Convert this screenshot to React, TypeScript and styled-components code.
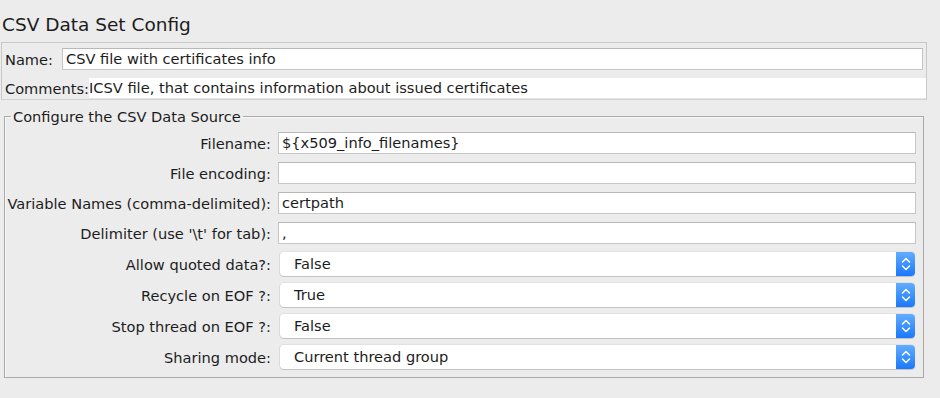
import styled, { createGlobalStyle } from "styled-components"

const GlobalStyle = createGlobalStyle`
    body {
        margin: 0;
        background: #ececec;
        font-family: "Lucida Grande", "DejaVu Sans", sans-serif;
        color: #1c1c1c;
    }
`

const Page = styled.div`
    width: 940px;
    height: 398px;
    overflow: hidden;
    background: #ececec;
`

const Title = styled.h1`
    margin: 0;
    height: 42px;
    padding-left: 2px;
    font-size: 18.5px;
    font-weight: 400;
    line-height: 50px;
`

const NamePanel = styled.div`
    box-sizing: border-box;
    width: 926px;
    margin-left: 1px;
    padding: 5px 0 0 2px;
    border: 1px solid #c8c8c8;
    border-bottom-color: #d2d2d2;
    display: flex;
    flex-direction: column;
    gap: 8px;
`

const NameRow = styled.div<{ $pad?: number }>`
    display: flex;
    align-items: center;
    padding-right: ${p => p.$pad ?? 0}px;
`

const InlineLabel = styled.label<{ $width?: number }>`
    width: ${p => (p.$width ? `${p.$width}px` : "auto")};
    flex-shrink: 0;
    padding-left: 1px;
    font-size: 14.6px;
`

const TextField = styled.div<{ $height?: number }>`
    box-sizing: border-box;
    flex: 1;
    height: ${p => p.$height ?? 22}px;
    padding-left: 3px;
    background: #fff;
    border: 1px solid #c6c6c6;
    border-top-color: #b8b8b8;
    font-size: 14.6px;
    line-height: 20px;
    white-space: nowrap;
    overflow: hidden;
`

const CommentsField = styled(TextField)`
    border: none;
    border-bottom: 1px solid #e4e4e4;
    padding-left: 0;
    height: 21px;
`

const Group = styled.fieldset`
    box-sizing: border-box;
    width: 920px;
    margin: 8px 0 0 4px;
    padding: 7px 7px 8px 0;
    border: 1px solid #a9a9a9;
    box-shadow: inset 1px 1px 0 #f8f8f8;
    min-width: 0;
`

const Legend = styled.legend`
    margin-left: 6px;
    padding: 0 2px;
    font-size: 14.6px;
    line-height: 17px;
`

const Form = styled.div`
    display: grid;
    grid-template-columns: 266px 1fr;
    column-gap: 7px;
    align-items: center;
`

const FieldLabel = styled.label<{ $gap: number }>`
    text-align: right;
    font-size: 14.6px;
    margin-bottom: ${p => p.$gap}px;
`

const FormField = styled(TextField)<{ $gap: number }>`
    margin-bottom: ${p => p.$gap}px;
`

const Combo = styled.div<{ $gap: number }>`
    box-sizing: border-box;
    height: 24px;
    margin: 0 1px ${p => p.$gap}px 2px;
    display: flex;
    align-items: stretch;
    background: #fff;
    border-radius: 4px;
    box-shadow: 0 1px 0 #c2c2c2, 0 -1px 0 #e2e2e2, -1px 0 0 #dadada;
    font-size: 14.6px;
`

const ComboText = styled.span`
    flex: 1;
    padding-left: 14px;
    line-height: 23px;
`

const ComboButton = styled.span`
    width: 19px;
    border-radius: 0 4px 4px 0;
    background: linear-gradient(#63adff, #1a78fa);
    display: flex;
    align-items: center;
    justify-content: center;
`

function Arrows() {
    return (
        <svg width="10" height="18" viewBox="0 0 10 18" fill="none" stroke="#fff" strokeWidth="1.5" strokeLinecap="round" strokeLinejoin="round">
            <path d="M1.5 7 L5 3.5 L8.5 7" />
            <path d="M1.5 11 L5 14.5 L8.5 11" />
        </svg>
    )
}

const textRows = [
    { label: "Filename:", value: "${x509_info_filenames}" },
    { label: "File encoding:", value: "" },
    { label: "Variable Names (comma-delimited):", value: "certpath" },
    { label: "Delimiter (use '\\t' for tab):", value: "," },
]

const comboRows = [
    { label: "Allow quoted data?:", value: "False" },
    { label: "Recycle on EOF ?:", value: "True" },
    { label: "Stop thread on EOF ?:", value: "False" },
    { label: "Sharing mode:", value: "Current thread group" },
]

export default function App() {
    return (
        <Page>
            <GlobalStyle />
            <Title>CSV Data Set Config</Title>
            <NamePanel>
                <NameRow $pad={3}>
                    <InlineLabel $width={57}>Name:</InlineLabel>
                    <TextField>CSV file with certificates info</TextField>
                </NameRow>
                <NameRow>
                    <InlineLabel>Comments:</InlineLabel>
                    <CommentsField>ICSV file, that contains information about issued certificates</CommentsField>
                </NameRow>
            </NamePanel>
            <Group>
                <Legend>Configure the CSV Data Source</Legend>
                <Form>
                    {textRows.map(r => (
                        <>
                            <FieldLabel key={r.label + "l"} $gap={8}>{r.label}</FieldLabel>
                            <FormField key={r.label} $gap={8}>{r.value}</FormField>
                        </>
                    ))}
                    {comboRows.map((r, i) => (
                        <>
                            <FieldLabel key={r.label + "l"} $gap={i < 3 ? 7 : 0}>{r.label}</FieldLabel>
                            <Combo key={r.label} $gap={i < 3 ? 7 : 0}>
                                <ComboText>{r.value}</ComboText>
                                <ComboButton><Arrows /></ComboButton>
                            </Combo>
                        </>
                    ))}
                </Form>
            </Group>
        </Page>
    )
}
